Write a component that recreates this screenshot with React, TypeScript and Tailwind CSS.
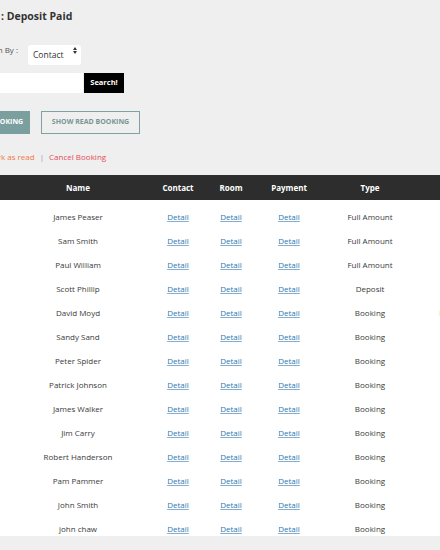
import { useState } from "react";

const bookings = [
  { name: "James Peaser", type: "Full Amount" },
  { name: "Sam Smith", type: "Full Amount" },
  { name: "Paul William", type: "Full Amount" },
  { name: "Scott Phillip", type: "Deposit" },
  { name: "David Moyd", type: "Booking", isNew: true },
  { name: "Sandy Sand", type: "Booking" },
  { name: "Peter Spider", type: "Booking" },
  { name: "Patrick Johnson", type: "Booking" },
  { name: "James Walker", type: "Booking" },
  { name: "Jim Carry", type: "Booking" },
  { name: "Robert Handerson", type: "Booking" },
  { name: "Pam Pammer", type: "Booking" },
  { name: "John Smith", type: "Booking" },
  { name: "john chaw", type: "Booking" },
];

function Detail() {
  return (
    <a
      href="#"
      className="text-[#2f78ad] underline decoration-[#7db2d6] underline-offset-1"
    >
      Detail
    </a>
  );
}

export default function App() {
  const [searchBy, setSearchBy] = useState("contact");

  return (
    <div
      className="w-[440px] h-[550px] overflow-hidden bg-[#efefef] text-[#3a3a3a]"
      style={{ fontFamily: '"Open Sans", "Liberation Sans", sans-serif' }}
    >
      <div className="-ml-[72px] w-[640px] pt-[9px]">
        <h1 className="text-[10.5px] leading-[14px] font-bold text-[#333] whitespace-nowrap">
          Booking Type : Deposit Paid
        </h1>

        <div className="mt-[17px] flex items-center gap-[10px] h-5">
          <span className="w-[90px] text-right text-[8px] text-[#555] whitespace-nowrap">
            Search In By :
          </span>
          <div className="relative w-[53px] h-5">
            <select
              value={searchBy}
              onChange={(e) => setSearchBy(e.target.value)}
              className="appearance-none w-full h-full bg-white rounded-[3px] pl-[5px] text-[8.5px] text-[#333] outline-none"
            >
              <option value="contact">Contact</option>
              <option value="name">Name</option>
            </select>
            <svg
              className="absolute right-[4px] top-[7px] pointer-events-none"
              width="4"
              height="7"
              viewBox="0 0 4 7"
            >
              <path d="M0 3L2 0L4 3Z" fill="#333" />
              <path d="M0 4L2 7L4 4Z" fill="#333" />
            </svg>
          </div>
        </div>

        <div className="mt-[13px] flex h-5 gap-px">
          <input
            type="text"
            className="w-[155px] h-5 bg-white outline-none px-1 text-[8px]"
          />
          <button className="w-10 h-5 bg-black text-white text-[7.5px] font-bold">
            Search!
          </button>
        </div>

        <div className="mt-[18px] flex gap-[11px]">
          <button className="w-[102px] h-[23px] bg-[#7b9e9f] text-white text-[7px] font-bold whitespace-nowrap">
            SHOW UNREAD BOOKING
          </button>
          <button className="w-[99px] h-[23px] border-[1.5px] border-[#7fa3a3] text-[#789595] text-[7px] font-bold whitespace-nowrap">
            SHOW READ BOOKING
          </button>
        </div>

        <div className="mt-[17px] flex items-center text-[8px] leading-3 whitespace-nowrap">
          <span className="w-[58px] text-[#666]">Action :</span>
          <a href="#" className="text-[#f07a45]">
            Mark as read
          </a>
          <span className="mx-[5px] text-[#999]">|</span>
          <a href="#" className="text-[#e64b56]">
            Cancel Booking
          </a>
        </div>

        <table className="mt-3 table-fixed w-[640px] bg-white text-[8px] border-collapse">
          <thead>
            <tr className="bg-[#2d2d2d] text-white h-[25px]">
              <th className="w-[78px] font-bold">#</th>
              <th className="w-[144px] font-bold">Name</th>
              <th className="w-[56px] font-bold">Contact</th>
              <th className="w-[50px] font-bold">Room</th>
              <th className="w-[66px] font-bold">Payment</th>
              <th className="w-[96px] font-bold">Type</th>
              <th className="w-[70px] font-bold">Status</th>
              <th className="font-bold">Action</th>
            </tr>
          </thead>
          <tbody>
            {bookings.map((b, i) => (
              <tr key={i} className="text-center leading-3">
                <td className="pt-[11px] pb-px">{i + 1}</td>
                <td className="pt-[11px] pb-px">{b.name}</td>
                <td className="pt-[11px] pb-px">
                  <Detail />
                </td>
                <td className="pt-[11px] pb-px">
                  <Detail />
                </td>
                <td className="pt-[11px] pb-px">
                  <Detail />
                </td>
                <td className="pt-[11px] pb-px">{b.type}</td>
                <td className="pt-[11px] pb-px text-left pl-[21px]">
                  {b.isNew && <span className="text-[#f5d27a]">New</span>}
                </td>
                <td className="pt-[11px] pb-px"></td>
              </tr>
            ))}
          </tbody>
        </table>
      </div>
    </div>
  );
}
